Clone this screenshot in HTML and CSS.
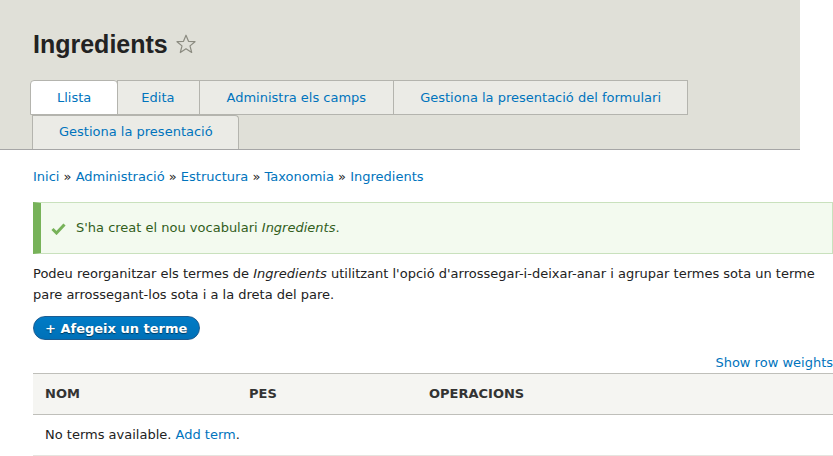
FILE: index.html
```html
<!DOCTYPE html>
<html lang="ca">
<head>
<meta charset="utf-8">
<title>Ingredients</title>
<link rel="stylesheet" href="styles.css">
</head>
<body>
<header class="header">
  <div class="title-row">
    <h1 class="page-title">Ingredients</h1>
    <svg class="star" width="20" height="20" viewBox="0 0 20 20" aria-hidden="true">
      <polygon points="10,1.2 12.5,7.3 19,7.7 14,11.9 15.7,18.5 10,14.8 4.3,18.5 6,11.9 1,7.7 7.5,7.3" fill="none" stroke="#8b8b80" stroke-width="1.2" stroke-linejoin="round"/>
    </svg>
  </div>
  <nav class="tabs">
    <ul class="tabs-row primary">
      <li class="tab active first"><a href="#">Llista</a></li>
      <li class="tab tab-edit"><a href="#">Edita</a></li>
      <li class="tab tab-fields"><a href="#">Administra els camps</a></li>
      <li class="tab last"><a href="#">Gestiona la presentació del formulari</a></li>
    </ul>
    <ul class="tabs-row secondary">
      <li class="tab tab-second"><a href="#">Gestiona la presentació</a></li>
    </ul>
  </nav>
</header>
<main class="content">
  <div class="breadcrumb">
    <a href="#">Inici</a> » <a href="#">Administració</a> » <a href="#">Estructura</a> » <a href="#">Taxonomia</a> » <a href="#">Ingredients</a>
  </div>
  <div class="message">
    <svg class="check" width="15" height="12" viewBox="0 0 15 12" aria-hidden="true">
      <polyline points="1.5,6 5.5,10 13.5,1.5" fill="none" stroke="#77b259" stroke-width="3"/>
    </svg>
    <span>S'ha creat el nou vocabulari <em>Ingredients</em>.</span>
  </div>
  <p class="help">Podeu reorganitzar els termes de <em>Ingredients</em> utilitzant l'opció d'arrossegar-i-deixar-anar i agrupar termes sota un terme pare arrossegant-los sota i a la dreta del pare.</p>
  <div class="actions">
    <a class="button" href="#">+ Afegeix un terme</a>
  </div>
  <div class="weights"><a href="#">Show row weights</a></div>
  <table class="terms">
    <thead>
      <tr><th class="col-name">Nom</th><th class="col-weight">Pes</th><th>Operacions</th></tr>
    </thead>
    <tbody>
      <tr><td colspan="3">No terms available. <a href="#">Add term</a>.</td></tr>
    </tbody>
  </table>
</main>
</body>
</html>
```
FILE: styles.css
```css
html { overflow: hidden; }
body {
  margin: 0;
  font-family: "DejaVu Sans", Verdana, sans-serif;
  font-size: 13px;
  line-height: 20px;
  color: #222330;
  background: #fff;
}
a { color: #0074bd; text-decoration: none; }

.header {
  width: 800px;
  box-sizing: border-box;
  background: #e0e0d8;
  border-bottom: 1px solid #a6a6a6;
  padding: 26px 0 0 30px;
}
.title-row {
  display: flex;
  align-items: center;
  gap: 8px;
  padding-left: 3px;
  height: 36px;
  margin-bottom: 18px;
}
.page-title {
  margin: 0;
  font-family: "Liberation Sans", Arial, sans-serif;
  font-size: 25px;
  font-weight: bold;
  line-height: 36px;
  color: #222;
}
.star { display: block; }

.tabs-row {
  list-style: none;
  margin: 0;
  padding: 0;
  display: flex;
}
.tab {
  border: 1px solid #b4b4ae;
  background: #ebebe6;
  margin-left: -1px;
}
.tab.first { margin-left: 0; border-top-left-radius: 4px; border-top-right-radius: 4px; }
.tab.active { background: #fff; }
.tab a {
  display: block;
  padding: 0 26px;
  line-height: 33px;
  font-size: 13px;
  text-align: center;
}
.tab-edit a { padding: 0 25px 0 23px; }
.tab-fields a { padding: 0 27px 0 26px; }
.primary .tab { height: 33px; }
.secondary { padding-left: 2px; }
.tab-second {
  margin-left: 0;
  border-bottom: 0;
  border-top-right-radius: 4px;
  height: 33px;
}
.tab-second a { padding: 0 25px 0 26px; line-height: 32px; }

.content {
  width: 800px;
  padding-left: 33px;
}
.breadcrumb {
  padding-top: 17px;
  line-height: 20px;
  color: #222;
}
.message {
  margin-top: 15px;
  display: flex;
  align-items: center;
  gap: 10px;
  border: 1px solid #c9e1bd;
  border-left: 8px solid #77b259;
  background: #f3faef;
  color: #325e1c;
  padding: 15px 0 15px 10px;
  line-height: 20px;
}
.check { display: block; margin-top: 1px; }
.help {
  margin: 9px 0 0;
  line-height: 21px;
  color: #222;
}
.actions { margin-top: 11px; }
.button {
  display: inline-block;
  box-sizing: border-box;
  height: 24px;
  line-height: 23px;
  padding: 0 12px 0 11px;
  border: 1px solid #1e5c90;
  border-radius: 20px;
  background: linear-gradient(#007bc6, #0071b8);
  color: #fff;
  font-weight: bold;
  text-shadow: 0 1px 1px rgba(0,0,0,0.5);
}
.weights {
  margin-top: 12px;
  text-align: right;
  line-height: 21px;
}
.terms {
  width: 800px;
  border-collapse: collapse;
}
.terms th {
  text-align: left;
  text-transform: uppercase;
  font-weight: bold;
  color: #333;
  background: #f5f5f2;
  border-top: 1px solid #bfbfba;
  border-bottom: 1px solid #bfbfba;
  height: 41px;
  padding: 0 12px;
  box-sizing: border-box;
}
.terms th.col-name { width: 204px; }
.terms th.col-weight { width: 180px; }
.terms td {
  height: 40px;
  padding: 0 12px;
  border-bottom: 1px solid #e6e4df;
  color: #222;
}
```
